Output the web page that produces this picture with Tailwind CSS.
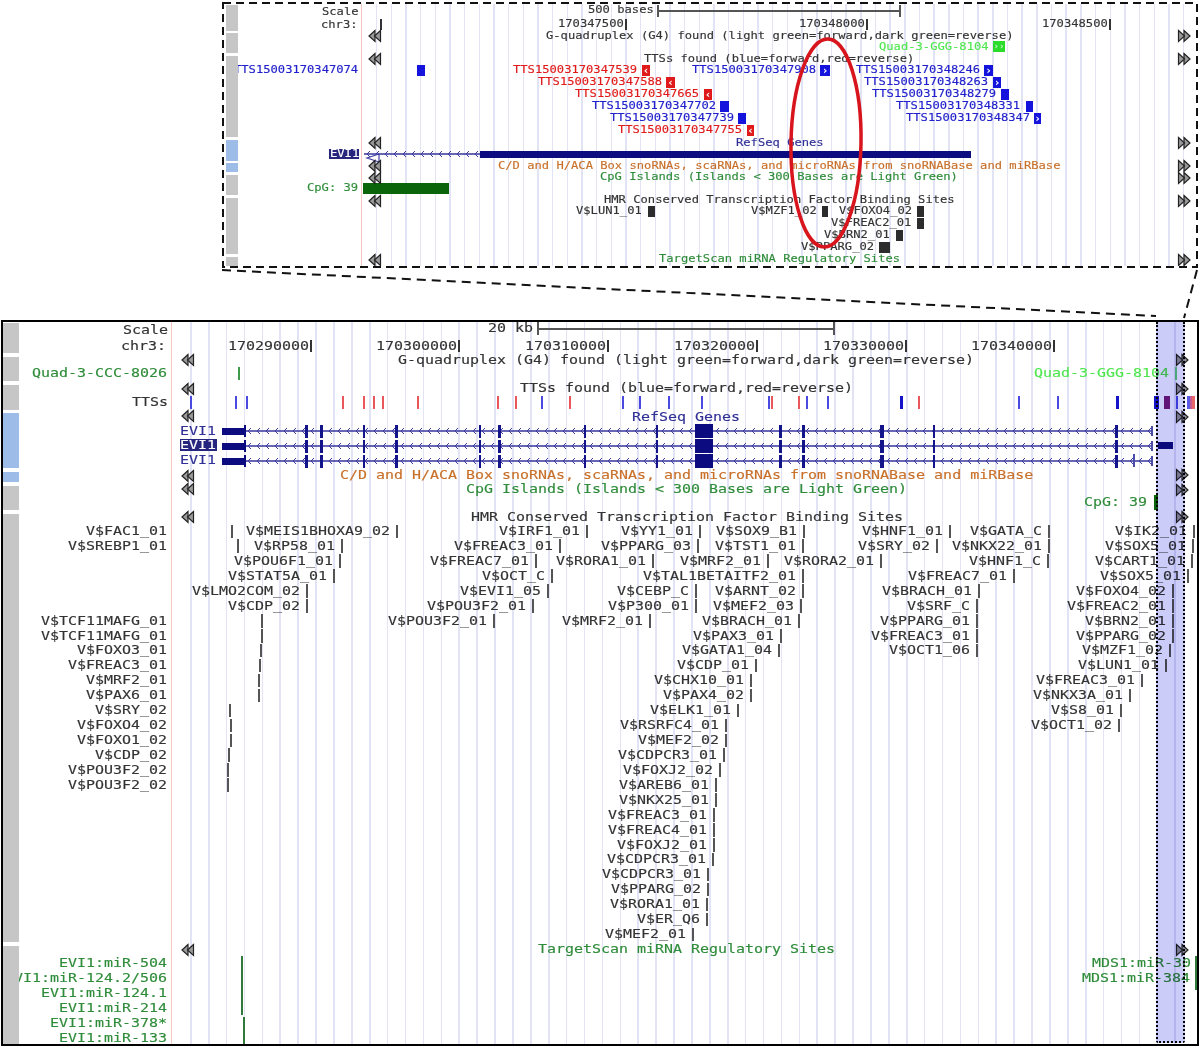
<!DOCTYPE html>
<html lang="en">
<head>
  <meta charset="UTF-8">
  <title>Genome browser tracks</title>
  <script src="https://cdn.jsdelivr.net/npm/@tailwindcss/browser@4"></script>
</head>
<body class="bg-white">
  <div class="relative w-[1200px] h-[1048px] overflow-hidden bg-white font-['DejaVu_Sans_Mono',monospace] blur-[0.35px]">

    <!-- zoomed panel -->
    <div id="top" class="relative ml-[222px] mt-[2px] w-[976px] h-[266px] border-2 border-transparent overflow-hidden">
      <div class="absolute left-[137px] top-0 bottom-0 w-px bg-[#f6c6c0]"></div>
      <div class="absolute left-[152px] right-[4px] top-0 bottom-0 bg-[repeating-linear-gradient(90deg,#e2e3f4_0,#e2e3f4_1.4px,transparent_1.4px,transparent_14.67px)]"></div>
    </div>

    <!-- full panel -->
    <div id="low" class="relative ml-[1px] mt-[52px] w-[1198px] h-[726px] border-2 border-black overflow-hidden">
      <div class="absolute left-[168px] top-0 bottom-0 w-px bg-[#f6c6c0]"></div>
      <div class="absolute left-[187px] right-[6px] top-0 bottom-0 bg-[repeating-linear-gradient(90deg,#e2e3f4_0,#e2e3f4_1.6px,transparent_1.6px,transparent_17.9px)]"></div>
    </div>

    <!-- dashed frame, connectors and the marked region -->
    <svg class="absolute left-0 top-0 w-[1200px] h-[1048px] pointer-events-none" viewBox="0 0 1200 1048" fill="none">
      <rect x="223" y="3" width="974" height="264" stroke="#111" stroke-width="2" stroke-dasharray="8 5"/>
      <path d="M222 270L1156 316" stroke="#111" stroke-width="2" stroke-dasharray="9 6"/>
      <path d="M1197 270L1184 318" stroke="#111" stroke-width="2" stroke-dasharray="9 6"/>
      <ellipse cx="826" cy="143" rx="35" ry="104" stroke="#d8141c" stroke-width="3.5" transform="rotate(1 826 143)"/>
    </svg>
  </div>

  <script>
    const top_ = { el: document.getElementById('top'), ox: 224, oy: 4, font: 'text-[11px] scale-x-[1.103]', cw: 7.3 };
    const low = { el: document.getElementById('low'), ox: 3, oy: 322, font: 'text-[12px] scale-x-[1.246]', cw: 9 };

    const DARK = 'text-[#333333]', GREEN = 'text-[#2f8c3a]', LIME = 'text-[#50e650]', BLUE = 'text-[#2020cc]',
      RED = 'text-[#e01a1a]', ORANGE = 'text-[#c8702a]', NAVY = 'text-[#303096]';

    function bar(p, cls, x, y, w, h) {
      const d = document.createElement('div');
      d.className = 'absolute ' + cls;
      d.style.cssText = `left:${x - p.ox}px;top:${y - p.oy}px;width:${w}px;height:${h}px`;
      p.el.appendChild(d);
      return d;
    }

    // text placed by its left edge
    function text(p, s, x, y, color) {
      const d = document.createElement('div');
      d.className = `absolute whitespace-nowrap origin-left leading-[10px] [-webkit-text-stroke:0.15px] ${p.font} ${color}`;
      d.style.cssText = `left:${x - p.ox}px;top:${y - 5 - p.oy}px`;
      d.textContent = s;
      p.el.appendChild(d);
    }
    const rtext = (p, s, r, y, color) => text(p, s, r - s.length * p.cw, y, color);

    function arrow(p, x, y, right) {
      const d = document.createElement('div');
      d.className = 'absolute w-[14px] h-[14px]';
      d.style.cssText = `left:${x - p.ox}px;top:${y - 7 - p.oy}px`;
      const t = right ? 'transform="matrix(-1 0 0 1 14 0)"' : '';
      d.innerHTML = `<svg width="14" height="14" viewBox="0 0 14 14"><g ${t} fill="#9a9a9a" stroke="#222" stroke-width="1.2"><path d="M7 1.5 1 7l6 5.5z"/><path d="M12.5 1.5 6.5 7l6 5.5z"/></g></svg>`;
      p.el.appendChild(d);
    }

    // intron lines with chevrons, drawn in page coordinates minus the panel origin
    function introns(p, from, to, rows, extra) {
      let h = '';
      rows.forEach(y0 => {
        const y = y0 - p.oy, a = from - p.ox, b = to - p.ox;
        h += `<path d="M${a} ${y}H${b}" stroke="#34349c" stroke-width="1.3"/><path d="`;
        for (let x = a + 3; x < b - 2; x += 9) h += `M${x + 3} ${y - 3}L${x} ${y}L${x + 3} ${y + 3}`;
        h += `" fill="none" stroke="#3d3da0" stroke-width="1"/>`;
      });
      const d = document.createElement('div');
      d.className = 'absolute left-0 top-0';
      d.innerHTML = `<svg width="1198" height="726" fill="none">${h}${extra || ''}</svg>`;
      p.el.appendChild(d);
    }

    /* ---------- zoomed panel ---------- */
    rtext(top_, 'Scale', 358, 12, DARK);
    rtext(top_, 'chr3:', 357, 25, DARK);
    bar(top_, 'bg-[#333]', 380, 19, 1.5, 11);
    [[625, '170347500'], [866, '170348000'], [1109, '170348500']].forEach(([x, s]) => {
      rtext(top_, s, x - 1, 24, DARK);
      bar(top_, 'bg-[#333]', x, 19, 1.5, 11);
    });
    text(top_, '500 bases', 588, 10, DARK);
    bar(top_, 'bg-[#555]', 658, 10, 242, 1.5);
    bar(top_, 'bg-[#555]', 657, 5, 1.5, 12);
    bar(top_, 'bg-[#555]', 899, 5, 1.5, 12);

    text(top_, 'G-quadruplex (G4) found (light green=forward,dark green=reverse)', 546, 36, DARK);
    rtext(top_, 'Quad-3-GGG-8104', 988, 47, LIME);
    text(top_, 'TTSs found (blue=forward,red=reverse)', 644, 59, DARK);

    [
      ['TTS15003170347074', 358, 70, 0, 417, 8],
      ['TTS15003170347539', 637, 70, 1, 642, 8],
      ['TTS15003170347908', 816, 70, 0, 820, 10, '›'],
      ['TTS15003170348246', 980, 70, 0, 984, 9, '›'],
      ['TTS15003170347588', 662, 82, 1, 666, 9],
      ['TTS15003170348263', 988, 82, 0, 993, 8, '›'],
      ['TTS15003170347665', 699, 94, 1, 704, 8],
      ['TTS15003170348279', 996, 94, 0, 1001, 8],
      ['TTS15003170347702', 716, 106, 0, 720, 9],
      ['TTS15003170348331', 1020, 106, 0, 1026, 7],
      ['TTS15003170347739', 734, 118, 0, 738, 8],
      ['TTS15003170348347', 1030, 118, 0, 1034, 7, '›'],
      ['TTS15003170347755', 742, 130, 1, 747, 7]
    ].forEach(([s, r, y, isRed, x, w, mark]) => {
      rtext(top_, s, r, y, isRed ? RED : BLUE);
      const b = bar(top_, (isRed ? 'bg-[#e01a1a]' : 'bg-[#1414dd]') + ' flex items-center justify-center text-white text-[11px] font-bold leading-none', x, y - 5.5, w, 11);
      b.textContent = isRed ? '‹' : (mark || '');
    });
    const q = bar(top_, 'bg-[#2bdc2b] flex items-center justify-center text-[#bff5bf] text-[9px] font-bold leading-none', 993, 41, 12, 11);
    q.textContent = '››';

    text(top_, 'RefSeq Genes', 736, 143, NAVY);
    introns(top_, 364, 480, [154], `<path d="M155 150l-12 4 12 4z" fill="#fff" stroke="#3f3fa4" stroke-width="1.2"/>`);
    bar(top_, 'bg-[#0c0c80]', 480, 151, 491, 7);
    bar(top_, 'bg-[#26267e]', 329, 149, 30, 10);
    text(top_, 'EVI1', 330, 154, 'text-white');

    text(top_, 'C/D and H/ACA Box snoRNAs, scaRNAs, and microRNAs from snoRNABase and miRBase', 498, 166, ORANGE);
    text(top_, 'CpG Islands (Islands < 300 Bases are Light Green)', 600, 177, GREEN);
    rtext(top_, 'CpG: 39', 358, 188, GREEN);
    bar(top_, 'bg-[#0a640a]', 363, 183, 86, 11);
    text(top_, 'HMR Conserved Transcription Factor Binding Sites', 604, 200, DARK);
    [['V$LUN1_01', 642, 211, 648, 7], ['V$MZF1_02', 817, 211, 822, 6], ['V$FOXO4_02', 912, 211, 917, 7],
     ['V$FREAC2_01', 911, 223, 917, 7], ['V$BRN2_01', 890, 235, 896, 7], ['V$PPARG_02', 874, 247, 879, 11]
    ].forEach(([s, r, y, x, w]) => {
      rtext(top_, s, r, y, DARK);
      bar(top_, 'bg-[#2c2c2c]', x, y - 5.5, w, 11);
    });
    text(top_, 'TargetScan miRNA Regulatory Sites', 659, 259, GREEN);

    [36, 59, 143, 166, 178, 201, 260].forEach(y => arrow(top_, 368, y));
    [36, 59, 143, 166, 178, 201, 260].forEach(y => arrow(top_, 1177, y, true));

    /* ---------- full panel ---------- */
    rtext(low, 'Scale', 168, 330, DARK);
    rtext(low, 'chr3:', 166, 346, DARK);
    [[310, '170290000'], [458, '170300000'], [607, '170310000'], [756, '170320000'], [905, '170330000'], [1053, '170340000']].forEach(([x, s]) => {
      rtext(low, s, x - 1, 346, DARK);
      bar(low, 'bg-[#333]', x, 340, 1.5, 12);
    });
    text(low, '20 kb', 488, 328, DARK);
    bar(low, 'bg-[#555]', 538, 328, 296, 1.5);
    bar(low, 'bg-[#555]', 537, 322, 1.5, 13);
    bar(low, 'bg-[#555]', 833, 322, 1.5, 13);

    text(low, 'G-quadruplex (G4) found (light green=forward,dark green=reverse)', 398, 360, DARK);
    rtext(low, 'Quad-3-CCC-8026', 167, 373, GREEN);
    bar(low, 'bg-[#3f9a4a]', 238, 367, 1.5, 13);
    text(low, 'Quad-3-GGG-8104', 1034, 373, LIME);
    bar(low, 'bg-[#5fd07a]', 1175, 367, 1.5, 13);

    text(low, 'TTSs found (blue=forward,red=reverse)', 520, 388, DARK);
    rtext(low, 'TTSs', 168, 402, DARK);
    const tb = 'bg-[#4a4ae0]', tr = 'bg-[#e8585a]';
    [190, 235, 246, 541, 622, 639, 668, 701, 768, 806, 827, 1018, 1057, 1176].forEach(x => bar(low, tb, x, 396, 1.5, 13));
    [342, 363, 373, 382, 417, 497, 515, 569, 771, 798, 918].forEach(x => bar(low, tr, x, 396, 1.5, 13));
    bar(low, 'bg-[#1414c8]', 900, 396, 3, 13);
    bar(low, 'bg-[#1414c8]', 1116, 396, 3, 13);
    bar(low, 'bg-[#1414c8]', 1154, 396, 5, 13);
    bar(low, 'bg-[#7b1a7b]', 1164, 396, 6, 13);
    bar(low, 'bg-[#5a5ae6]', 1187, 396, 3, 13);
    bar(low, 'bg-[#c45a90]', 1190, 396, 2, 13);
    bar(low, 'bg-[#e8686a]', 1192, 396, 3, 13);

    text(low, 'RefSeq Genes', 632, 417, NAVY);
    rtext(low, 'EVI1', 216, 431, NAVY);
    bar(low, 'bg-[#26267e]', 180, 439, 37, 12);
    text(low, 'EVI1', 180, 445, 'text-white');
    rtext(low, 'EVI1', 216, 460, NAVY);

    introns(low, 245, 1152, [431, 446, 461]);
    [431, 446, 461].forEach(y => {
      bar(low, 'bg-[#0c0c80]', 222, y - 3.5, 23, 7);
      bar(low, 'bg-[#0c0c80]', 244, y - 6, 2, 12);
      [[305, 3], [320, 3], [363, 1.5], [395, 3], [479, 1.5], [498, 3], [584, 2], [656, 2], [779, 3], [802, 3], [880, 4], [933, 2], [1115, 3]]
        .forEach(([x, w]) => bar(low, 'bg-[#14148a]', x, y - 6.5, w, 13));
      bar(low, 'bg-[#0c0c80]', 695, y - 7, 18, 14);
      bar(low, 'bg-[#4b4ba8]', 1151, y - 5, 1.5, 10);
    });
    bar(low, 'bg-[#4b4ba8]', 1133, 454, 1.5, 13);
    bar(low, 'bg-[#0c0c80]', 1158, 442, 15, 7);

    text(low, 'C/D and H/ACA Box snoRNAs, scaRNAs, and microRNAs from snoRNABase and miRBase', 340, 475, ORANGE);
    text(low, 'CpG Islands (Islands < 300 Bases are Light Green)', 466, 489, GREEN);
    rtext(low, 'CpG: 39', 1147, 502, GREEN);
    bar(low, 'bg-[#0a640a]', 1154, 495, 4, 15);
    text(low, 'HMR Conserved Transcription Factor Binding Sites', 471, 517, DARK);

    // binding sites: [row, name, tick x]; a null name is a tick alone
    const rowY = n => 531 + n * 14.93;
    [
      [0, null, 231], [0, 'V$MEIS1BHOXA9_02', 396], [0, 'V$IRF1_01', 586], [0, 'V$YY1_01', 699], [0, 'V$SOX9_B1', 803], [0, 'V$HNF1_01', 949], [0, 'V$GATA_C', 1048], [0, 'V$IK2_01', 1193],
      [1, null, 237], [1, 'V$RP58_01', 341], [1, 'V$FREAC3_01', 559], [1, 'V$PPARG_03', 697], [1, 'V$TST1_01', 802], [1, 'V$SRY_02', 936], [1, 'V$NKX22_01', 1048], [1, 'V$SOX5_01', 1192],
      [2, 'V$POU6F1_01', 339], [2, 'V$FREAC7_01', 535], [2, 'V$RORA1_01', 652], [2, 'V$MRF2_01', 767], [2, 'V$RORA2_01', 880], [2, 'V$HNF1_C', 1047], [2, 'V$CART1_01', 1191],
      [3, 'V$STAT5A_01', 333], [3, 'V$OCT_C', 551], [3, 'V$TAL1BETAITF2_01', 802], [3, 'V$FREAC7_01', 1013], [3, 'V$SOX5_01', 1187],
      [4, 'V$LMO2COM_02', 306], [4, 'V$EVI1_05', 547], [4, 'V$CEBP_C', 695], [4, 'V$ARNT_02', 802], [4, 'V$BRACH_01', 978], [4, 'V$FOXO4_02', 1172],
      [5, 'V$CDP_02', 306], [5, 'V$POU3F2_01', 532], [5, 'V$P300_01', 695], [5, 'V$MEF2_03', 800], [5, 'V$SRF_C', 976], [5, 'V$FREAC2_01', 1172],
      [6, null, 261], [6, 'V$POU3F2_01', 493], [6, 'V$MRF2_01', 649], [6, 'V$BRACH_01', 798], [6, 'V$PPARG_01', 976], [6, 'V$BRN2_01', 1172],
      [7, null, 261], [7, 'V$PAX3_01', 780], [7, 'V$FREAC3_01', 976], [7, 'V$PPARG_02', 1172],
      [8, null, 260], [8, 'V$GATA1_04', 778], [8, 'V$OCT1_06', 976], [8, 'V$MZF1_02', 1169],
      [9, null, 259], [9, 'V$CDP_01', 755], [9, 'V$LUN1_01', 1165],
      [10, null, 258], [10, 'V$CHX10_01', 750], [10, 'V$FREAC3_01', 1141],
      [11, null, 258], [11, 'V$PAX4_02', 750], [11, 'V$NKX3A_01', 1129],
      [12, null, 229], [12, 'V$ELK1_01', 737], [12, 'V$S8_01', 1120],
      [13, null, 230], [13, 'V$RSRFC4_01', 725], [13, 'V$OCT1_02', 1118],
      [14, null, 230], [14, 'V$MEF2_02', 725],
      [15, null, 228], [15, 'V$CDPCR3_01', 723],
      [16, null, 227], [16, 'V$FOXJ2_02', 719],
      [17, null, 227], [17, 'V$AREB6_01', 715],
      [18, 'V$NKX25_01', 715], [19, 'V$FREAC3_01', 713], [20, 'V$FREAC4_01', 713], [21, 'V$FOXJ2_01', 713],
      [22, 'V$CDPCR3_01', 712], [23, 'V$CDPCR3_01', 707], [24, 'V$PPARG_02', 707], [25, 'V$RORA1_01', 706],
      [26, 'V$ER_Q6', 706], [27, 'V$MEF2_01', 692]
    ].forEach(([n, s, x]) => {
      if (s) rtext(low, s, x - 6, rowY(n), DARK);
      bar(low, 'bg-[#555]', x, rowY(n) - 6.5, 1.5, 13.5);
    });

    [[0, 'V$FAC1_01'], [1, 'V$SREBP1_01'], [6, 'V$TCF11MAFG_01'], [7, 'V$TCF11MAFG_01'], [8, 'V$FOXO3_01'], [9, 'V$FREAC3_01'],
     [10, 'V$MRF2_01'], [11, 'V$PAX6_01'], [12, 'V$SRY_02'], [13, 'V$FOXO4_02'], [14, 'V$FOXO1_02'], [15, 'V$CDP_02'], [16, 'V$POU3F2_02'], [17, 'V$POU3F2_02']
    ].forEach(([n, s]) => rtext(low, s, 167, rowY(n), DARK));

    text(low, 'TargetScan miRNA Regulatory Sites', 538, 949, GREEN);
    ['EVI1:miR-504', 'EVI1:miR-124.2/506', 'EVI1:miR-124.1', 'EVI1:miR-214', 'EVI1:miR-378*', 'EVI1:miR-133']
      .forEach((s, i) => rtext(low, s, 167, 963 + i * 15, GREEN));
    bar(low, 'bg-[#2f7a3a]', 241, 956, 1.5, 59);
    bar(low, 'bg-[#2f7a3a]', 243, 1017, 1.5, 27);
    rtext(low, 'MDS1:miR-30', 1191, 963, GREEN);
    rtext(low, 'MDS1:miR-384', 1190, 978, GREEN);
    bar(low, 'bg-[#2f7a3a]', 1195, 956, 2, 34);

    [360, 389, 416, 476, 489, 517, 950].forEach(y => arrow(low, 181, y));
    [360, 389, 417, 475, 490, 517, 950].forEach(y => arrow(low, 1175, y, true));

    // selected window over the tracks
    bar(low, 'bg-[#cbccf8] mix-blend-multiply border-x-2 border-b-2 border-dotted border-black rounded-b-[2px]', 1156, 322, 29, 721);

    /* ---------- grey side buttons ---------- */
    function sideBar(p, cls, x, w, spans) {
      spans.forEach(([y1, y2, blue]) => bar(p, blue ? 'bg-[#9dbde8]' : cls, x, y1, w, y2 - y1));
    }
    sideBar(top_, 'bg-[#c6c6c6]', 226, 12, [[5, 31], [33, 53], [56, 137], [140, 161, 1], [163, 172, 1], [175, 195], [198, 254], [257, 266]]);
    sideBar(low, 'bg-[#c6c6c6]', 3, 16, [[323, 353], [357, 381], [385, 410], [413, 468, 1], [472, 482, 1], [486, 510], [514, 942], [946, 1044]]);
  </script>
</body>
</html>
